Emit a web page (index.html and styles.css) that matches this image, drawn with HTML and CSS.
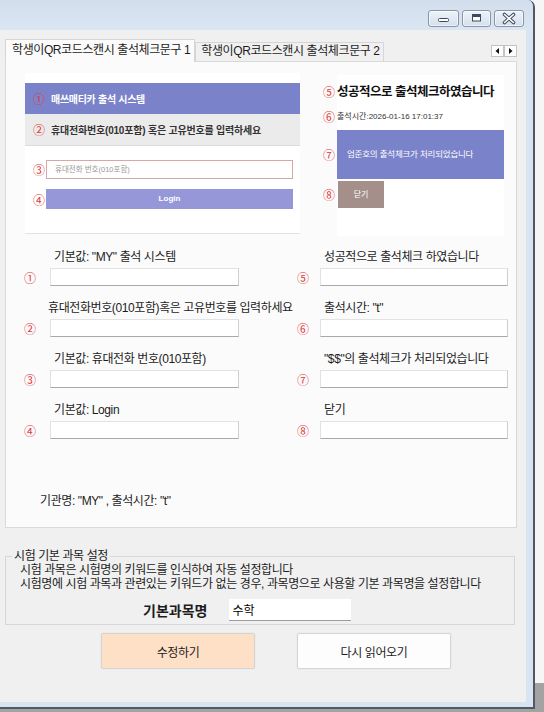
FILE: index.html
```html
<!DOCTYPE html>
<html>
<head>
    <meta charset="utf-8" />
    <link rel="stylesheet" href="styles.css">
</head>
<body>
<div class="window">
    <div class="titlebar">
        <span class="tb-btn tb-min">
            <svg width="31" height="17" viewBox="0 0 31 17"><rect x="10.5" y="8.5" width="10" height="3" rx="1" fill="#fff" stroke="#3b4a5e"/></svg>
        </span>
        <span class="tb-btn tb-max">
            <svg width="29" height="17" viewBox="0 0 29 17"><rect x="10.5" y="4.5" width="8" height="6.5" fill="#fff" stroke="#3b4a5e"/><rect x="11" y="5" width="7" height="2" fill="#3b4a5e"/></svg>
        </span>
        <span class="tb-btn tb-close">
            <svg width="30" height="17" viewBox="0 0 30 17"><path d="M10.5 4.5 L19.5 12.5 M19.5 4.5 L10.5 12.5" stroke="#3b4a5e" stroke-width="3.6" stroke-linecap="round"/><path d="M10.5 4.5 L19.5 12.5 M19.5 4.5 L10.5 12.5" stroke="#fff" stroke-width="1.6" stroke-linecap="round"/></svg>
        </span>
    </div>
    <div class="client">
        <div class="tabs">
            <div class="tab active">학생이QR코드스캔시 출석체크문구 1</div>
            <div class="tab">학생이QR코드스캔시 출석체크문구 2</div>
            <div class="tab-scroll">
                <span class="arrow"><svg width="11" height="10" viewBox="0 0 11 10"><path d="M7 2 L3.5 5 L7 8 Z" fill="#111"/></svg></span>
                <span class="arrow"><svg width="11" height="10" viewBox="0 0 11 10"><path d="M4 2 L7.5 5 L4 8 Z" fill="#111"/></svg></span>
            </div>
        </div>
        <div class="tab-page">
            <div class="preview">
                <div class="shot-login">
                    <div class="shot-head"><span class="num">①</span>매쓰매티카 출석 시스템</div>
                    <div class="shot-sub"><span class="num">②</span>휴대전화번호(010포함) 혹은 고유번호를 입력하세요</div>
                    <div class="shot-body">
                        <div class="shot-row"><span class="num">③</span><div class="shot-input">휴대전화 번호(010포함)</div></div>
                        <div class="shot-row gap"><span class="num">④</span><div class="shot-btn">Login</div></div>
                    </div>
                </div>
                <div class="shot-done">
                    <div class="done-row"><span class="num">⑤</span><span class="done-title">성공적으로 출석체크하였습니다</span></div>
                    <div class="done-row time"><span class="num">⑥</span><span>출석시간:2026-01-16 17:01:37</span></div>
                    <div class="done-row msg"><span class="num">⑦</span><div class="done-box">엄준호의 출석체크가 처리되었습니다</div></div>
                    <div class="done-row close"><span class="num">⑧</span><div class="done-close">닫기</div></div>
                </div>
            </div>
            <div class="form">
                <div class="col">
                    <div class="field">
                        <label>기본값: "MY" 출석 시스템</label>
                        <span class="num">①</span><input class="text-input" type="text">
                    </div>
                    <div class="field">
                        <label class="wide">휴대전화번호(010포함)혹은 고유번호를 입력하세요</label>
                        <span class="num">②</span><input class="text-input" type="text">
                    </div>
                    <div class="field">
                        <label>기본값: 휴대전화 번호(010포함)</label>
                        <span class="num">③</span><input class="text-input" type="text">
                    </div>
                    <div class="field">
                        <label>기본값: Login</label>
                        <span class="num">④</span><input class="text-input" type="text">
                    </div>
                </div>
                <div class="col right">
                    <div class="field">
                        <label>성공적으로 출석체크 하였습니다</label>
                        <span class="num">⑤</span><input class="text-input" type="text">
                    </div>
                    <div class="field">
                        <label>출석시간: "t"</label>
                        <span class="num">⑥</span><input class="text-input" type="text">
                    </div>
                    <div class="field">
                        <label>"$$"의 출석체크가 처리되었습니다</label>
                        <span class="num">⑦</span><input class="text-input" type="text">
                    </div>
                    <div class="field">
                        <label>닫기</label>
                        <span class="num">⑧</span><input class="text-input" type="text">
                    </div>
                </div>
            </div>
            <div class="note">기관명: "MY" , 출석시간: "t"</div>
        </div>
        <fieldset class="group">
            <legend>시험 기본 과목 설정</legend>
            <div class="desc">시험 과목은 시험명의 키워드를 인식하여 자동 설정합니다</div>
            <div class="desc">시험명에 시험 과목과 관련있는 키워드가 없는 경우, 과목명으로 사용할 기본 과목명을 설정합니다</div>
            <div class="subject">
                <span class="subject-label">기본과목명</span>
                <input class="subject-input" type="text" value="수학">
            </div>
        </fieldset>
        <div class="actions">
            <button class="btn btn-save">수정하기</button>
            <button class="btn">다시 읽어오기</button>
        </div>
    </div>
</div>
</body>
</html>
```

FILE: styles.css
```css
body{
    margin: 0;
    width: 544px;
    height: 712px;
    overflow: hidden;
    background: linear-gradient(#f6f6f6 683px, #a3a3a3 683px);
    font-family: "Liberation Sans", "Noto Sans CJK KR", sans-serif;
    font-size: 12px;
    letter-spacing: -0.4px;
    color: #1c1c1c;
}
.window{
    width: 533px;
    height: 707px;
    display: flex;
    flex-direction: column;
    background: #d9e4f1;
    border-right: 2px solid #505a66;
    border-bottom: 2px solid #505a66;
    border-top-right-radius: 7px;
}
.titlebar{
    height: 30px;
    box-sizing: border-box;
    display: flex;
    justify-content: flex-end;
    gap: 3px;
    padding: 10px 9px 0 0;
    background: linear-gradient(#d2deec, #dbe6f3);
    border-top-right-radius: 7px;
}
.tb-btn{
    display: block;
    height: 17px;
    box-sizing: border-box;
    border: 1px solid #8796aa;
    border-radius: 3px;
    background: linear-gradient(#eef3f9, #d5dfec);
    box-shadow: inset 0 0 0 1px rgba(255,255,255,0.6);
}
.tb-btn svg{
    display: block;
    margin: -1px;
}
.tb-min{ width: 31px; }
.tb-max{ width: 29px; }
.tb-close{ width: 30px; }

.client{
    flex: 1;
    margin: 0 7px 5px 0;
    background: #f0f0f0;
}
.tabs{
    height: 31px;
    display: flex;
    align-items: flex-end;
    padding-left: 5px;
}
.tab{
    height: 18px;
    line-height: 17px;
    padding: 0 3px 0 5px;
    border: 1px solid #d6d6d6;
    border-bottom: none;
    background: #f0f0f0;
    white-space: nowrap;
}
.tab.active{
    position: relative;
    z-index: 1;
    height: 22px;
    line-height: 21px;
    padding: 0 4px 0 6px;
    margin-bottom: -1px;
    background: #fbfbfb;
}
.tab-scroll{
    display: flex;
    margin: 0 9px 4px auto;
}
.arrow{
    display: block;
    width: 13px;
    height: 12px;
    box-sizing: border-box;
    border: 1px solid #c4c4c4;
    background: #fdfdfd;
}
.arrow svg{
    display: block;
}
.tab-page{
    height: 467px;
    box-sizing: border-box;
    margin: 0 9px 0 5px;
    border: 1px solid #d9d9d9;
    background: #fbfbfb;
}

.num{
    color: #e2383c;
    font-family: "Noto Sans CJK KR", sans-serif;
    font-size: 12px;
    font-weight: 400;
    letter-spacing: 0;
}

/* screenshot previews */
.preview{
    display: flex;
    align-items: flex-start;
    padding: 11px 0 0 19px;
}
.shot-login{
    width: 275px;
    height: 161px;
    box-sizing: border-box;
    padding-top: 10px;
    background: #fff;
    border-bottom: 1px solid #e2e2e2;
}
.shot-head{
    height: 31px;
    display: flex;
    align-items: center;
    padding-left: 8px;
    background: #7a82c9;
    color: #fff;
    font-size: 10px;
    font-weight: 700;
    letter-spacing: -0.3px;
}
.shot-head .num,
.shot-sub .num{
    width: 18px;
}
.shot-sub{
    height: 31px;
    display: flex;
    align-items: center;
    padding-left: 8px;
    background: #ebebeb;
    border-bottom: 1px solid #dcdcdc;
    color: #333;
    font-size: 10px;
    font-weight: 700;
    letter-spacing: -0.2px;
}
.shot-body{
    padding: 14px 7px 0 8px;
}
.shot-row{
    display: flex;
    align-items: center;
}
.shot-row.gap{
    margin-top: 10px;
}
.shot-row .num{
    width: 13px;
}
.shot-input{
    flex: 1;
    height: 19px;
    box-sizing: border-box;
    padding-left: 8px;
    border: 1px solid #d8a8a8;
    color: #9a9a9a;
    font-size: 7.5px;
    letter-spacing: 0;
    line-height: 17px;
}
.shot-btn{
    flex: 1;
    height: 20px;
    background: #9597d8;
    color: #fff;
    font-size: 8px;
    font-weight: 700;
    letter-spacing: 0;
    line-height: 20px;
    text-align: center;
}
.shot-done{
    width: 167px;
    height: 161px;
    box-sizing: border-box;
    margin: 2px 0 0 37px;
    padding: 8px 0 0 2px;
    background: #fff;
}
.done-row{
    display: flex;
    align-items: center;
}
.done-row .num{
    width: 14px;
    margin-left: -16px;
    flex-shrink: 0;
}
.done-title{
    font-size: 12.5px;
    font-weight: 700;
    letter-spacing: -0.5px;
    line-height: 16px;
    color: #111;
    white-space: nowrap;
}
.done-row.time{
    margin-top: 11px;
    font-size: 8px;
    letter-spacing: 0;
    line-height: 12px;
    color: #333;
}
.done-row.msg{
    margin-top: 7px;
}
.done-box{
    flex: 1;
    height: 49px;
    padding-left: 10px;
    background: #7a82c9;
    color: #fff;
    font-size: 8.5px;
    letter-spacing: -0.2px;
    line-height: 49px;
}
.done-row.close{
    margin-top: 2px;
}
.done-close{
    width: 46px;
    height: 27px;
    margin-left: 1px;
    background: #a58f8a;
    color: #fff;
    font-size: 8px;
    letter-spacing: 0;
    line-height: 27px;
    text-align: center;
}

/* settings form */
.form{
    display: flex;
    gap: 58px;
    padding: 13px 0 0 18px;
}
.field{
    display: grid;
    grid-template-columns: 26px 189px;
    row-gap: 3px;
    align-items: center;
    margin-bottom: 14px;
}
.col.right .field{
    grid-template-columns: 23px 188px;
}
.field label{
    grid-column: 2;
    height: 16px;
    line-height: 16px;
    padding-left: 4px;
    white-space: nowrap;
}
.field label.wide{
    padding-left: 0;
    margin-left: -2px;
}
.field .num{
    grid-column: 1;
}
.text-input{
    height: 18px;
    box-sizing: border-box;
    margin: 0;
    border: 1px solid #e2e2e2;
    border-bottom-color: #a9a9a9;
    border-right-color: #cfcfcf;
    background: #fff;
    outline: none;
}
.note{
    margin-top: 40px;
    padding-left: 34px;
    line-height: 16px;
}

/* subject group */
.group{
    margin: 21px 11px 0 5px;
    padding: 0 0 3px 0;
    border: 1px solid #d7d7d7;
}
.group legend{
    margin-left: 6px;
    padding: 0 2px;
    line-height: 14px;
}
.desc{
    padding-left: 14px;
    line-height: 14px;
}
.subject{
    display: flex;
    align-items: center;
    margin-top: 8px;
    padding-left: 137px;
}
.subject-label{
    font-size: 14px;
    font-weight: 700;
    letter-spacing: 0;
    margin-right: 22px;
}
.subject-input{
    width: 122px;
    height: 22px;
    box-sizing: border-box;
    margin: 0;
    padding: 0 3px;
    border: none;
    border-bottom: 1px solid #9c9c9c;
    background: #fff;
    font-family: inherit;
    font-size: 12px;
    outline: none;
}

.actions{
    display: flex;
    gap: 42px;
    margin-top: 8px;
    padding-left: 101px;
}
.btn{
    width: 154px;
    height: 36px;
    border: 1px solid #d4d4d4;
    border-radius: 2px;
    background: #fdfdfd;
    box-shadow: 0 0 0 1px #ececec;
    font-family: inherit;
    font-size: 12px;
    letter-spacing: -0.4px;
    color: #1c1c1c;
}
.btn-save{
    background: #fde0c5;
}
```
